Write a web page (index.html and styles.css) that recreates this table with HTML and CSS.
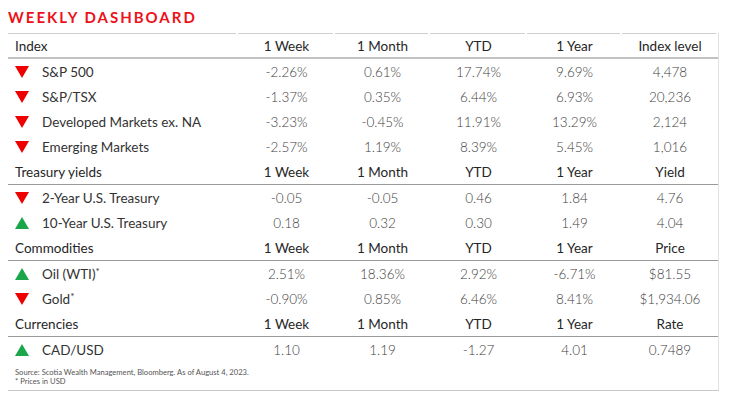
FILE: index.html
```html
<!DOCTYPE html>
<html lang="en">
<head>
<meta charset="utf-8">
<title>Weekly Dashboard</title>
<link rel="stylesheet" href="styles.css">
</head>
<body>
<div class="dash">
  <h1 class="title">WEEKLY DASHBOARD</h1>
  <div class="panel">
    <table class="grid">
      <colgroup>
        <col class="c-name"><col class="c-w1"><col class="c-w2"><col class="c-w3"><col class="c-w4"><col class="c-w5">
      </colgroup>
      <tr class="sect first">
        <th class="label">Index</th><th>1 Week</th><th>1 Month</th><th>YTD</th><th>1 Year</th><th>Index level</th>
      </tr>
      <tr><td class="name"><span class="tri down"></span>S&amp;P 500</td><td>-2.26%</td><td>0.61%</td><td>17.74%</td><td>9.69%</td><td>4,478</td></tr>
      <tr><td class="name"><span class="tri down"></span>S&amp;P/TSX</td><td>-1.37%</td><td>0.35%</td><td>6.44%</td><td>6.93%</td><td>20,236</td></tr>
      <tr><td class="name"><span class="tri down"></span>Developed Markets ex. NA</td><td>-3.23%</td><td>-0.45%</td><td>11.91%</td><td>13.29%</td><td>2,124</td></tr>
      <tr><td class="name"><span class="tri down"></span>Emerging Markets</td><td>-2.57%</td><td>1.19%</td><td>8.39%</td><td>5.45%</td><td>1,016</td></tr>
      <tr class="sect">
        <th class="label">Treasury yields</th><th>1 Week</th><th>1 Month</th><th>YTD</th><th>1 Year</th><th>Yield</th>
      </tr>
      <tr><td class="name"><span class="tri down"></span>2-Year U.S. Treasury</td><td>-0.05</td><td>-0.05</td><td>0.46</td><td>1.84</td><td>4.76</td></tr>
      <tr><td class="name"><span class="tri up"></span>10-Year U.S. Treasury</td><td>0.18</td><td>0.32</td><td>0.30</td><td>1.49</td><td>4.04</td></tr>
      <tr class="sect">
        <th class="label">Commodities</th><th>1 Week</th><th>1 Month</th><th>YTD</th><th>1 Year</th><th>Price</th>
      </tr>
      <tr><td class="name"><span class="tri up"></span>Oil (WTI)<sup>*</sup></td><td>2.51%</td><td>18.36%</td><td>2.92%</td><td>-6.71%</td><td>$81.55</td></tr>
      <tr><td class="name"><span class="tri down"></span>Gold<sup>*</sup></td><td>-0.90%</td><td>0.85%</td><td>6.46%</td><td>8.41%</td><td>$1,934.06</td></tr>
      <tr class="sect">
        <th class="label">Currencies</th><th>1 Week</th><th>1 Month</th><th>YTD</th><th>1 Year</th><th>Rate</th>
      </tr>
      <tr><td class="name"><span class="tri up"></span>CAD/USD</td><td>1.10</td><td>1.19</td><td>-1.27</td><td>4.01</td><td>0.7489</td></tr>
    </table>
    <div class="foot">
      <p>Source: Scotia Wealth Management, Bloomberg. As of August 4, 2023.</p>
      <p>* Prices in USD</p>
    </div>
  </div>
</div>
</body>
</html>
```

FILE: styles.css
```css
* { box-sizing: border-box; }
html, body { margin: 0; background: #fff; }
body {
  padding: 8px;
  font-family: "Lato", "Open Sans", "Liberation Sans", sans-serif;
  color: #3d3d3d;
}
.dash { width: 711px; }
.title {
  margin: 0;
  height: 25px;
  padding-top: 1px;
  font-size: 15px;
  line-height: 17px;
  font-weight: 700;
  letter-spacing: 2px;
  color: #ec111a;
}
.panel {
  border-right: 1px solid #e2e2e2;
  border-bottom: 1px solid #c8c8c8;
  padding-bottom: 4px;
}
.grid {
  width: 710px;
  border-collapse: separate;
  border-spacing: 0;
  table-layout: fixed;
  font-size: 13.5px;
}
.c-name { width: 230px; }
.c-w1 { width: 97px; }
.c-w2 { width: 95px; }
.c-w3 { width: 97px; }
.c-w4 { width: 95px; }
.c-w5 { width: 96px; }
.grid th, .grid td {
  box-sizing: content-box;
  padding: 0;
  height: 25px;
  text-align: center;
  white-space: nowrap;
  font-weight: 400;
}
.grid td { color: #404040; font-weight: 300; }
.grid th { color: #262626; }
.grid .label, .grid .name { text-align: left; padding-left: 7px; }
.grid .name { color: #333; font-weight: 400; }
.sect th { border-bottom: 1px solid #9a9a9a; }
.sect.first th {
  height: 23px;
  padding-top: 1px;
  border-bottom: 2px solid #c2c2c2;
  background: linear-gradient(#cfcfcf, #cfcfcf) top left / calc(100% - 2px) 1px no-repeat;
}
.tri {
  display: inline-block;
  width: 0;
  height: 0;
  margin-right: 13px;
  vertical-align: -1px;
  border-left: 7px solid transparent;
  border-right: 7px solid transparent;
}
.tri.down { border-top: 12px solid #ee0000; }
.tri.up { border-bottom: 12px solid #1ca64c; }
sup { font-size: 10px; vertical-align: 4px; line-height: 0; }
.foot {
  padding: 6px 0 0 7px;
  font-size: 7.6px;
  line-height: 9px;
  color: #555;
}
.foot p { margin: 0; }
```
